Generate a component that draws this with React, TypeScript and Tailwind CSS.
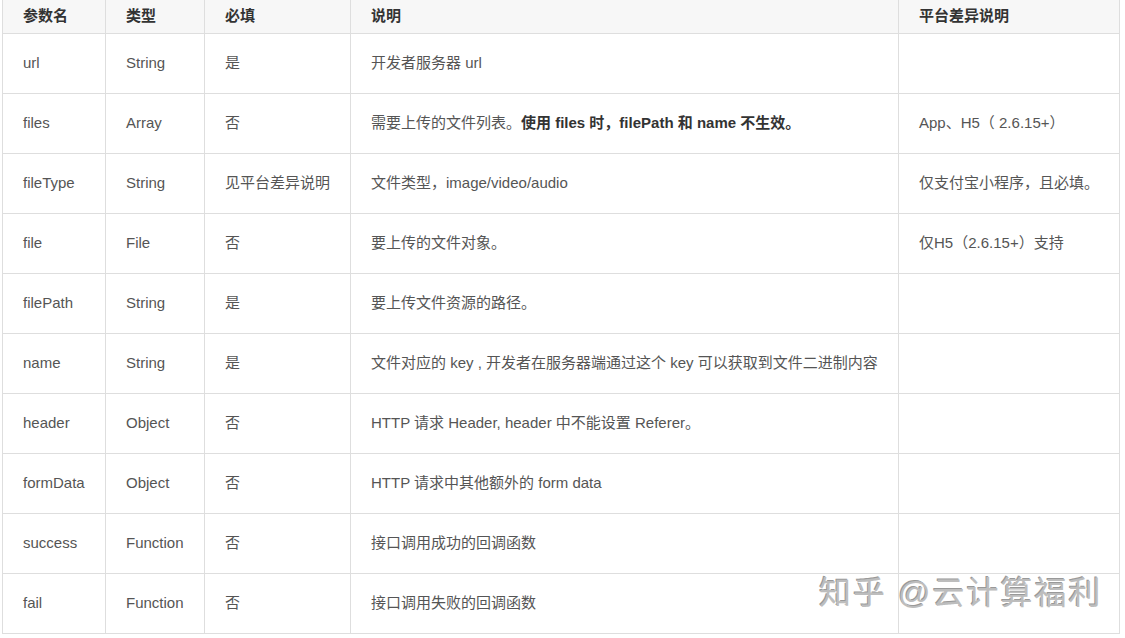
import React from "react"

type Row = { name: string; type: string; required: string; desc: React.ReactNode; platform?: string }

const rows: Row[] = [
    { name: "url", type: "String", required: "是", desc: "开发者服务器 url" },
    {
        name: "files",
        type: "Array",
        required: "否",
        desc: (
            <>
                需要上传的文件列表。<b className="font-bold text-[#333]">使用 files 时，filePath 和 name 不生效。</b>
            </>
        ),
        platform: "App、H5（ 2.6.15+）",
    },
    { name: "fileType", type: "String", required: "见平台差异说明", desc: "文件类型，image/video/audio", platform: "仅支付宝小程序，且必填。" },
    { name: "file", type: "File", required: "否", desc: "要上传的文件对象。", platform: "仅H5（2.6.15+）支持" },
    { name: "filePath", type: "String", required: "是", desc: "要上传文件资源的路径。" },
    { name: "name", type: "String", required: "是", desc: "文件对应的 key , 开发者在服务器端通过这个 key 可以获取到文件二进制内容" },
    { name: "header", type: "Object", required: "否", desc: "HTTP 请求 Header, header 中不能设置 Referer。" },
    { name: "formData", type: "Object", required: "否", desc: "HTTP 请求中其他额外的 form data" },
    { name: "success", type: "Function", required: "否", desc: "接口调用成功的回调函数" },
    { name: "fail", type: "Function", required: "否", desc: "接口调用失败的回调函数" },
]

const cell = "border border-[#dedede] px-5 text-left align-middle whitespace-nowrap"

export default function App() {
    return (
        <div
            className="relative w-[1125px] h-[638px] overflow-hidden bg-white pl-[2px]"
            style={{ fontFamily: '"Liberation Sans", "Noto Sans CJK SC", sans-serif' }}
        >
            <table className="table-fixed border-collapse w-[1117px] text-[15px] text-[#555] -mt-px">
                <colgroup>
                    <col className="w-[103px]" />
                    <col className="w-[99px]" />
                    <col className="w-[146px]" />
                    <col className="w-[548px]" />
                    <col className="w-[221px]" />
                </colgroup>
                <thead className="bg-[#f7f7f7]">
                    <tr className="h-[34px]">
                        <th className={`${cell} font-bold text-[#333]`}>参数名</th>
                        <th className={`${cell} font-bold text-[#333]`}>类型</th>
                        <th className={`${cell} font-bold text-[#333]`}>必填</th>
                        <th className={`${cell} font-bold text-[#333]`}>说明</th>
                        <th className={`${cell} font-bold text-[#333]`}>平台差异说明</th>
                    </tr>
                </thead>
                <tbody>
                    {rows.map((r) => (
                        <tr key={r.name} className="h-[60px]">
                            <td className={cell}>{r.name}</td>
                            <td className={cell}>{r.type}</td>
                            <td className={cell}>{r.required}</td>
                            <td className={cell}>{r.desc}</td>
                            <td className={cell}>{r.platform}</td>
                        </tr>
                    ))}
                </tbody>
            </table>

            {/* watermark */}
            <div
                className="absolute left-[819px] top-[573px] text-[32px] leading-[40px] text-[#bdbdbd] tracking-[2px] whitespace-nowrap"
                style={{ textShadow: "1px 1px 0 #fff, -1px -1px 0 #999" }}
            >
                知乎 @云计算福利
            </div>
        </div>
    )
}
